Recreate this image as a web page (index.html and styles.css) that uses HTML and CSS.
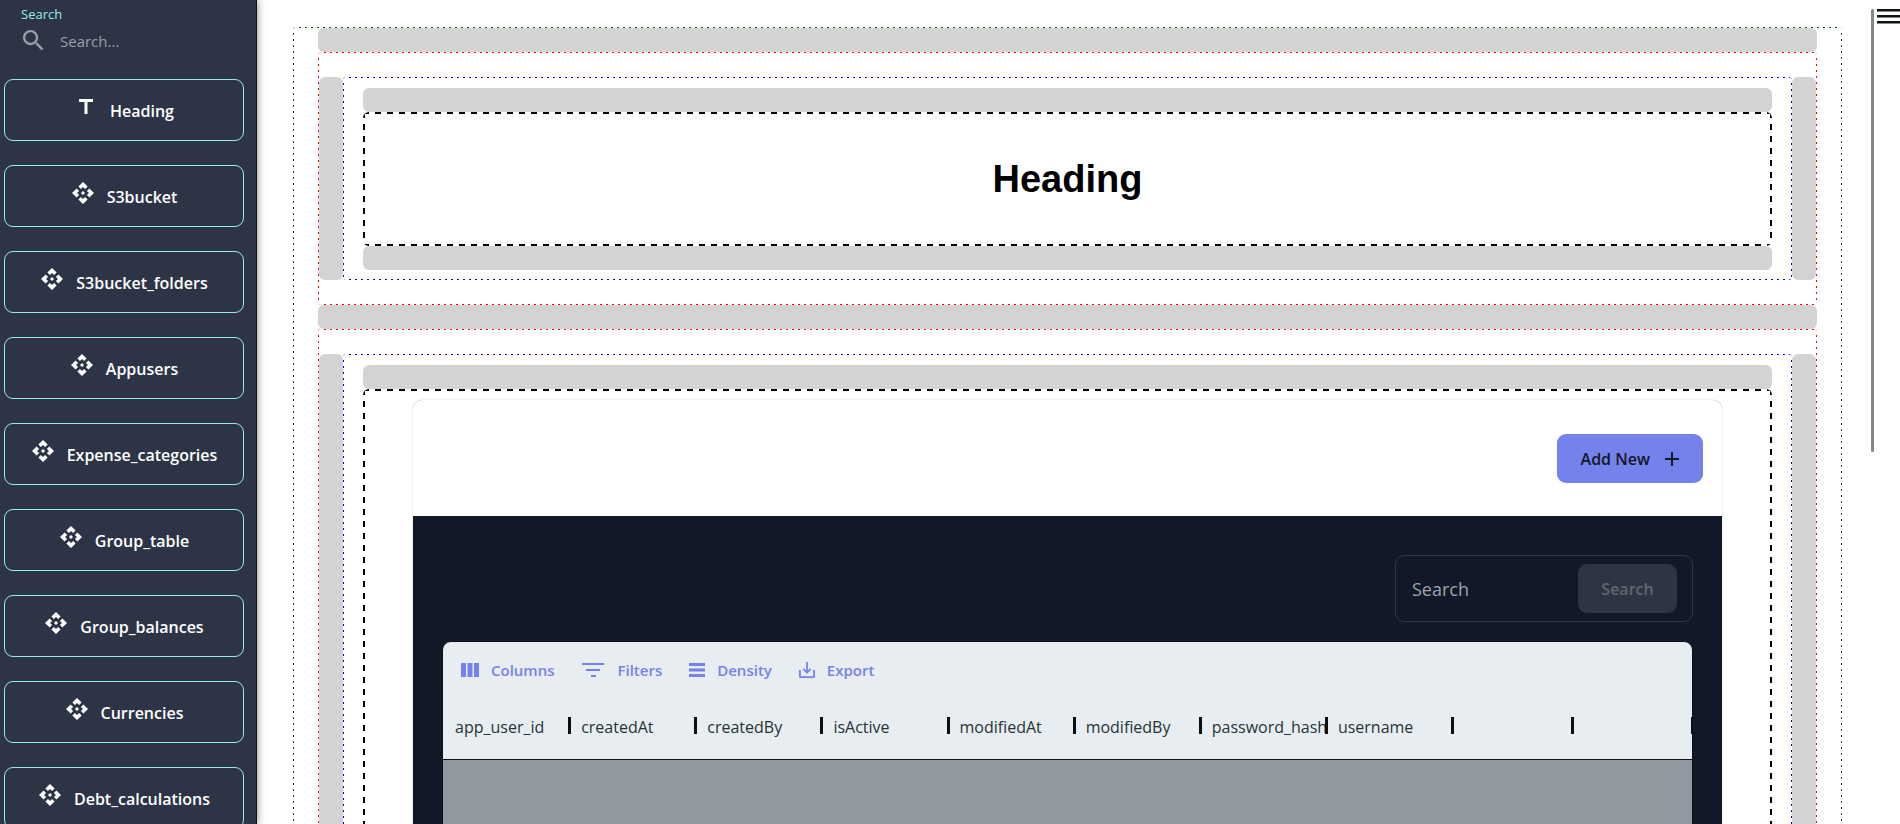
FILE: index.html
```html
<!DOCTYPE html>
<html lang="en">
<head>
<meta charset="utf-8">
<title>Page builder</title>
<link rel="stylesheet" href="styles.css">
</head>
<body>
<svg class="sprite" aria-hidden="true">
  <symbol id="api" viewBox="0 0 24 24"><path d="m14 12-2 2-2-2 2-2 2 2zm-2-6 2.12 2.12 2.5-2.5L12 1 7.38 5.62l2.5 2.5L12 6zm-6 6 2.12-2.12-2.5-2.5L1 12l4.62 4.62 2.5-2.5L6 12zm12 0-2.12 2.12 2.5 2.5L23 12l-4.62-4.62-2.5 2.5L18 12zm-6 6-2.12-2.12-2.5 2.5L12 23l4.62-4.62-2.5-2.5L12 18z"/></symbol>
</svg>
<div class="app">
  <aside class="sidebar">
    <div class="finder">
      <label class="finder-label" for="find">Search</label>
      <div class="finder-row">
        <svg class="finder-icon" viewBox="3 3 18 18"><path d="M15.5 14h-.79l-.28-.27C15.41 12.59 16 11.11 16 9.5 16 5.91 13.09 3 9.5 3S3 5.91 3 9.5 5.91 16 9.5 16c1.61 0 3.09-.59 4.23-1.57l.27.28v.79l5 4.99L20.49 19l-4.99-5zm-6 0C7.01 14 5 11.99 5 9.5S7.01 5 9.5 5 14 7.01 14 9.5 11.99 14 9.5 14z"/></svg>
        <input class="finder-input" id="find" type="text" placeholder="Search...">
      </div>
    </div>
    <nav class="palette">
      <button class="block"><svg class="icon" viewBox="0 0 24 24"><path d="M5 4v3h5.500v12h3V7H19V4z"/></svg><span>Heading</span></button>
      <button class="block"><svg class="icon"><use href="#api"/></svg><span>S3bucket</span></button>
      <button class="block"><svg class="icon"><use href="#api"/></svg><span>S3bucket_folders</span></button>
      <button class="block"><svg class="icon"><use href="#api"/></svg><span>Appusers</span></button>
      <button class="block"><svg class="icon"><use href="#api"/></svg><span>Expense_categories</span></button>
      <button class="block"><svg class="icon"><use href="#api"/></svg><span>Group_table</span></button>
      <button class="block"><svg class="icon"><use href="#api"/></svg><span>Group_balances</span></button>
      <button class="block"><svg class="icon"><use href="#api"/></svg><span>Currencies</span></button>
      <button class="block"><svg class="icon"><use href="#api"/></svg><span>Debt_calculations</span></button>
    </nav>
  </aside>

  <main class="canvas">
    <div class="outlined page-zone">
      <div class="drop-bar"></div>
      <section class="outlined row-zone">
        <div class="drop-side"></div>
        <div class="outlined column-zone">
          <div class="drop-bar"></div>
          <div class="outlined item-zone heading-zone"><h1 class="heading">Heading</h1></div>
          <div class="drop-bar"></div>
        </div>
        <div class="drop-side"></div>
      </section>
      <div class="drop-bar"></div>
      <section class="outlined row-zone">
        <div class="drop-side"></div>
        <div class="outlined column-zone">
          <div class="drop-bar"></div>
          <div class="outlined item-zone table-zone">
            <div class="card">
              <header class="card-head">
                <button class="add"><span>Add New</span><svg class="icon" viewBox="0 0 24 24"><path d="M19 13h-6v6h-2v-6H5v-2h6V5h2v6h6z"/></svg></button>
              </header>
              <div class="card-body">
                <form class="search">
                  <input class="search-input" type="text" placeholder="Search" aria-label="Search rows">
                  <button class="search-button" type="button" disabled>Search</button>
                </form>
                <div class="grid">
                  <div class="toolbar">
                    <button class="tool"><svg class="tool-icon columns" viewBox="0 0 18 14"><path d="M0 0h5v14H0zM6.500 0h5v14h-5zM13 0h5v14h-5z"/></svg>Columns</button>
                    <button class="tool"><svg class="tool-icon filters" viewBox="0 0 22 16"><path d="M0 1h22v2H0zM4 7h14v2H4zM9 13h5v2H9z"/></svg>Filters</button>
                    <button class="tool"><svg class="tool-icon" viewBox="0 0 16 16"><path d="M0 1h16v3H0zM0 6.500h16v3H0zM0 12h16v3H0z"/></svg>Density</button>
                    <button class="tool"><svg class="tool-icon" viewBox="0 0 16 16"><path d="M14.200 8v6.200H1.800V8H0v6.500C0 15.300.7 16 1.500 16h13c.8 0 1.500-.7 1.500-1.500V8zM8.900 8.500l2.300-2.300 1.200 1.200L8 11.800 3.600 7.400l1.200-1.200 2.300 2.300V0h1.800z"/></svg>Export</button>
                  </div>
                  <table class="data">
                    <colgroup><col span="8"><col class="narrow" span="2"></colgroup>
                    <thead>
                      <tr>
                        <th>app_user_id<i class="sep"></i></th>
                        <th>createdAt<i class="sep"></i></th>
                        <th>createdBy<i class="sep"></i></th>
                        <th>isActive<i class="sep"></i></th>
                        <th>modifiedAt<i class="sep"></i></th>
                        <th>modifiedBy<i class="sep"></i></th>
                        <th>password_hash<i class="sep"></i></th>
                        <th>username<i class="sep"></i></th>
                        <th><i class="sep"></i></th>
                        <th><i class="sep"></i></th>
                      </tr>
                    </thead>
                  </table>
                  <div class="rows"></div>
                </div>
              </div>
            </div>
          </div>
        </div>
        <div class="drop-side"></div>
      </section>
    </div>
  </main>

  <div class="rail">
    <div class="rail-bar"></div>
    <button class="menu" aria-label="Menu"><svg class="menu-icon" viewBox="0 0 23 15"><path d="M0 0h23v2.500H0zM0 6h23v2.500H0zM0 12h23v2.500H0z"/></svg></button>
  </div>
</div>
</body>
</html>
```
FILE: styles.css
```css
* { box-sizing: border-box; }

body {
  margin: 0;
  background: #fff;
  font-family: "Open Sans", "Noto Sans", sans-serif;
  font-size: 16px;
}

button, input { font: inherit; }
svg { display: block; flex: none; fill: currentColor; }
.sprite { display: none; }
.icon { width: 24px; height: 24px; }

.app {
  display: flex;
  height: 100vh;
  overflow: hidden;
}

/* Sidebar */
.sidebar {
  flex: none;
  width: 257px;
  padding: 4px 12px 0 4px;
  overflow: hidden;
  background: #2d3446;
  border-right: 1px solid #0d0f14;
  box-shadow: 0 0 8px rgba(0, 0, 0, 0.5);
  color: #fff;
}

.finder {
  height: 75px;
  padding-left: 17px;
}

.finder-label {
  display: block;
  color: #90f0e4;
  font-size: 13px;
  line-height: 20px;
}

.finder-row {
  display: flex;
  align-items: center;
  gap: 16px;
  height: 32px;
  padding-left: 2px;
  color: #9a9fa8;
}

.finder-icon { width: 21px; height: 21px; }

.finder-input {
  flex: 1;
  min-width: 0;
  padding: 2px 0 0;
  border: 0;
  outline: 0;
  background: none;
  color: #fff;
  font-size: 15px;
}

.finder-input::placeholder { color: #9a9fa8; opacity: 1; }

.palette {
  display: flex;
  flex-direction: column;
  gap: 24px;
}

.block {
  display: flex;
  flex: none;
  align-items: center;
  justify-content: center;
  gap: 12px;
  height: 62px;
  padding: 2px 0 0;
  border: 1px solid #90f0e4;
  border-radius: 9px;
  background: none;
  color: #fff;
  font-weight: 600;
}

.block .icon { margin-bottom: 8px; }

/* Canvas and nested drop zones */
.canvas {
  flex: 1;
  min-width: 0;
  padding: 27px 29px 0 36px;
}

/* Evenly spaced dashes: --line thick, --dash long, repeated every --step */
.outlined {
  --line: 1px;
  --dash: 2px;
  --step: 6px;
  --across: repeating-linear-gradient(90deg, var(--ink) 0 var(--dash), transparent var(--dash) var(--step));
  --down: repeating-linear-gradient(180deg, var(--ink) 0 var(--dash), transparent var(--dash) var(--step));
  border: var(--line) solid transparent;
  border-radius: 4px;
  background:
    var(--across) top / 100% var(--line) no-repeat border-box,
    var(--across) bottom / 100% var(--line) no-repeat border-box,
    var(--down) left / var(--line) 100% no-repeat border-box,
    var(--down) right / var(--line) 100% no-repeat border-box;
}

.page-zone {
  --ink: #004d00;
  padding: 0 24px 24px;
}

.drop-bar {
  height: 24px;
  border-radius: 6px;
  background: #d3d3d3;
}

.row-zone {
  --ink: #f00;
  display: flex;
  padding: 24px 0;
}

.drop-side {
  flex: none;
  width: 24px;
  border-radius: 6px;
  background: #d3d3d3;
}

.column-zone {
  --ink: #00f;
  flex: 1;
  min-width: 0;
  padding: 10px 19px 9px;
}

.item-zone {
  --ink: #000;
  --line: 2px;
  --dash: 6px;
  --step: 12px;
  border-radius: 6px;
}

.heading-zone { padding: 43px 24px; }

.heading {
  margin: 0;
  color: #000;
  font: bold 38px/44px "Liberation Sans", Arial, sans-serif;
  text-align: center;
}

.table-zone { padding: 9px 48px; }

/* Data card */
.card {
  overflow: hidden;
  border-radius: 9px 9px 0 0;
  box-shadow: 0 0 1px rgba(0, 0, 0, 0.5);
}

.card-head {
  display: flex;
  justify-content: flex-end;
  padding: 34px 19px 33px;
}

.add {
  display: flex;
  align-items: center;
  gap: 10px;
  height: 49px;
  padding: 0 19px 0 24px;
  border: 0;
  border-radius: 9px;
  background: #7582eb;
  color: #111827;
  font-weight: 600;
}

.card-body {
  padding: 39px 29px 36px;
  background: #111827;
}

.search {
  display: flex;
  align-items: center;
  width: 298px;
  height: 67px;
  margin: 0 0 19px auto;
  padding: 0 15px 0 16px;
  border: 1px solid #2d3542;
  border-radius: 9px;
}

.search-input {
  flex: 1;
  min-width: 0;
  padding: 0;
  border: 0;
  outline: 0;
  background: none;
  color: #fff;
  font-size: 18px;
}

.search-input::placeholder { color: #9fa3ab; opacity: 1; }

.search-button {
  width: 99px;
  height: 49px;
  border: 0;
  border-radius: 9px;
  background: #2e3542;
  color: #5f6870;
  font-weight: 600;
}

.grid {
  overflow: hidden;
  border: 1px solid #0c0f16;
  border-radius: 9px;
  background: #e8edf1;
}

.toolbar {
  display: flex;
  gap: 27px;
  padding: 16px 18px 0;
}

.tool {
  display: flex;
  align-items: center;
  gap: 12px;
  height: 24px;
  padding: 0;
  border: 0;
  background: none;
  color: #7582eb;
  font-size: 15px;
  font-weight: 600;
}

.tool-icon { width: 16px; height: 16px; }
.columns { width: 18px; height: 14px; }
.filters { width: 22px; margin-right: 2px; }

.data {
  width: 100%;
  table-layout: fixed;
  border-collapse: collapse;
  border-bottom: 1px solid #111;
}

.narrow { width: 120px; }

.data th {
  position: relative;
  height: 77px;
  padding: 13px 0 0 12px;
  color: #263435;
  font-weight: 400;
  text-align: left;
  white-space: nowrap;
}

.sep {
  position: absolute;
  top: 35px;
  right: -2px;
  width: 3px;
  height: 17px;
  background: #0c0f12;
}

.rows {
  height: 360px;
  background: #91989f;
}

/* Right rail */
.rail {
  display: flex;
  flex: none;
  align-items: flex-start;
  gap: 3px;
  padding-top: 9px;
}

.rail-bar {
  width: 3px;
  height: 443px;
  border-radius: 2px;
  background: #858585;
}

.menu {
  padding: 0;
  border: 0;
  background: none;
  color: #0c1414;
}

.menu-icon { width: 23px; height: 15px; }
```
